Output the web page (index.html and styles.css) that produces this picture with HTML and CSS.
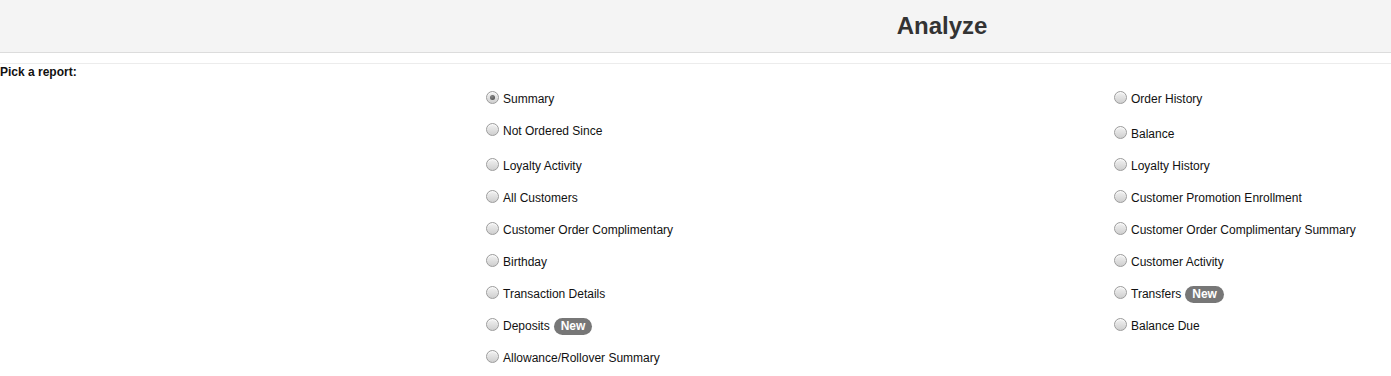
FILE: index.html
```html
<!DOCTYPE html>
<html lang="en">
<head>
  <meta charset="UTF-8" />
  <title>Analyze</title>
  <link rel="stylesheet" href="styles.css">
</head>
<body>
  <div class="page-header">
    <h1>Analyze</h1>
  </div>
  <div class="divider"></div>

  <div class="pick-label">Pick a report:</div>

  <div class="report-grid">
    <label class="report"><span class="radio checked"></span>Summary</label>
    <label class="report"><span class="radio"></span>Order History</label>

    <label class="report tall"><span class="radio"></span>Not Ordered Since</label>
    <label class="report tall low"><span class="radio"></span>Balance</label>

    <label class="report"><span class="radio"></span>Loyalty Activity</label>
    <label class="report"><span class="radio"></span>Loyalty History</label>

    <label class="report"><span class="radio"></span>All Customers</label>
    <label class="report"><span class="radio"></span>Customer Promotion Enrollment</label>

    <label class="report"><span class="radio"></span>Customer Order Complimentary</label>
    <label class="report"><span class="radio"></span>Customer Order Complimentary Summary</label>

    <label class="report"><span class="radio"></span>Birthday</label>
    <label class="report"><span class="radio"></span>Customer Activity</label>

    <label class="report"><span class="radio"></span>Transaction Details</label>
    <label class="report"><span class="radio"></span>Transfers <span class="badge">New</span></label>

    <label class="report"><span class="radio"></span>Deposits <span class="badge">New</span></label>
    <label class="report"><span class="radio"></span>Balance Due</label>

    <label class="report"><span class="radio"></span>Allowance/Rollover Summary</label>
  </div>
</body>
</html>
```

FILE: styles.css
```css
body {
  margin: 0;
  background: white;
  font-family: "Liberation Sans", Arial, sans-serif;
  font-size: 12px;
  color: #111;
}

.page-header {
  height: 52px;
  background: #f4f4f4;
  border-bottom: 1px solid #dcdcdc;
  padding-left: 493px;
  text-align: center;
}

.page-header h1 {
  margin: 0;
  font-size: 24px;
  line-height: 52px;
  color: #333;
  font-weight: bold;
}

.divider {
  margin-top: 10px;
  border-top: 1px solid #ececec;
}

.pick-label {
  font-weight: bold;
  line-height: 14px;
  padding-top: 1px;
}

.report-grid {
  display: grid;
  grid-template-columns: 628px auto;
  padding-left: 486px;
}

.report {
  display: flex;
  align-items: flex-start;
  height: 32px;
  box-sizing: border-box;
  padding-top: 13px;
  line-height: 14px;
  white-space: nowrap;
}

.report.tall {
  height: 35px;
}

.report.low {
  padding-top: 16px;
}

.radio {
  width: 11px;
  height: 11px;
  margin-top: -1px;
  margin-right: 4px;
  border: 1px solid #9c9c9c;
  border-radius: 50%;
  background: linear-gradient(#f2f2f2, #cfcfcf);
  box-shadow: inset 0 1px 1px rgba(255, 255, 255, 0.8);
  position: relative;
  flex-shrink: 0;
}

.radio.checked::after {
  content: "";
  position: absolute;
  left: 3px;
  top: 3px;
  width: 5px;
  height: 5px;
  border-radius: 50%;
  background: radial-gradient(circle at 40% 35%, #888, #444);
}

.badge {
  display: inline-block;
  margin-left: 4px;
  margin-top: -1px;
  padding: 2px 7px;
  line-height: 13px;
  border-radius: 9px;
  background: #777;
  color: white;
  font-weight: bold;
  font-size: 12px;
}
```
